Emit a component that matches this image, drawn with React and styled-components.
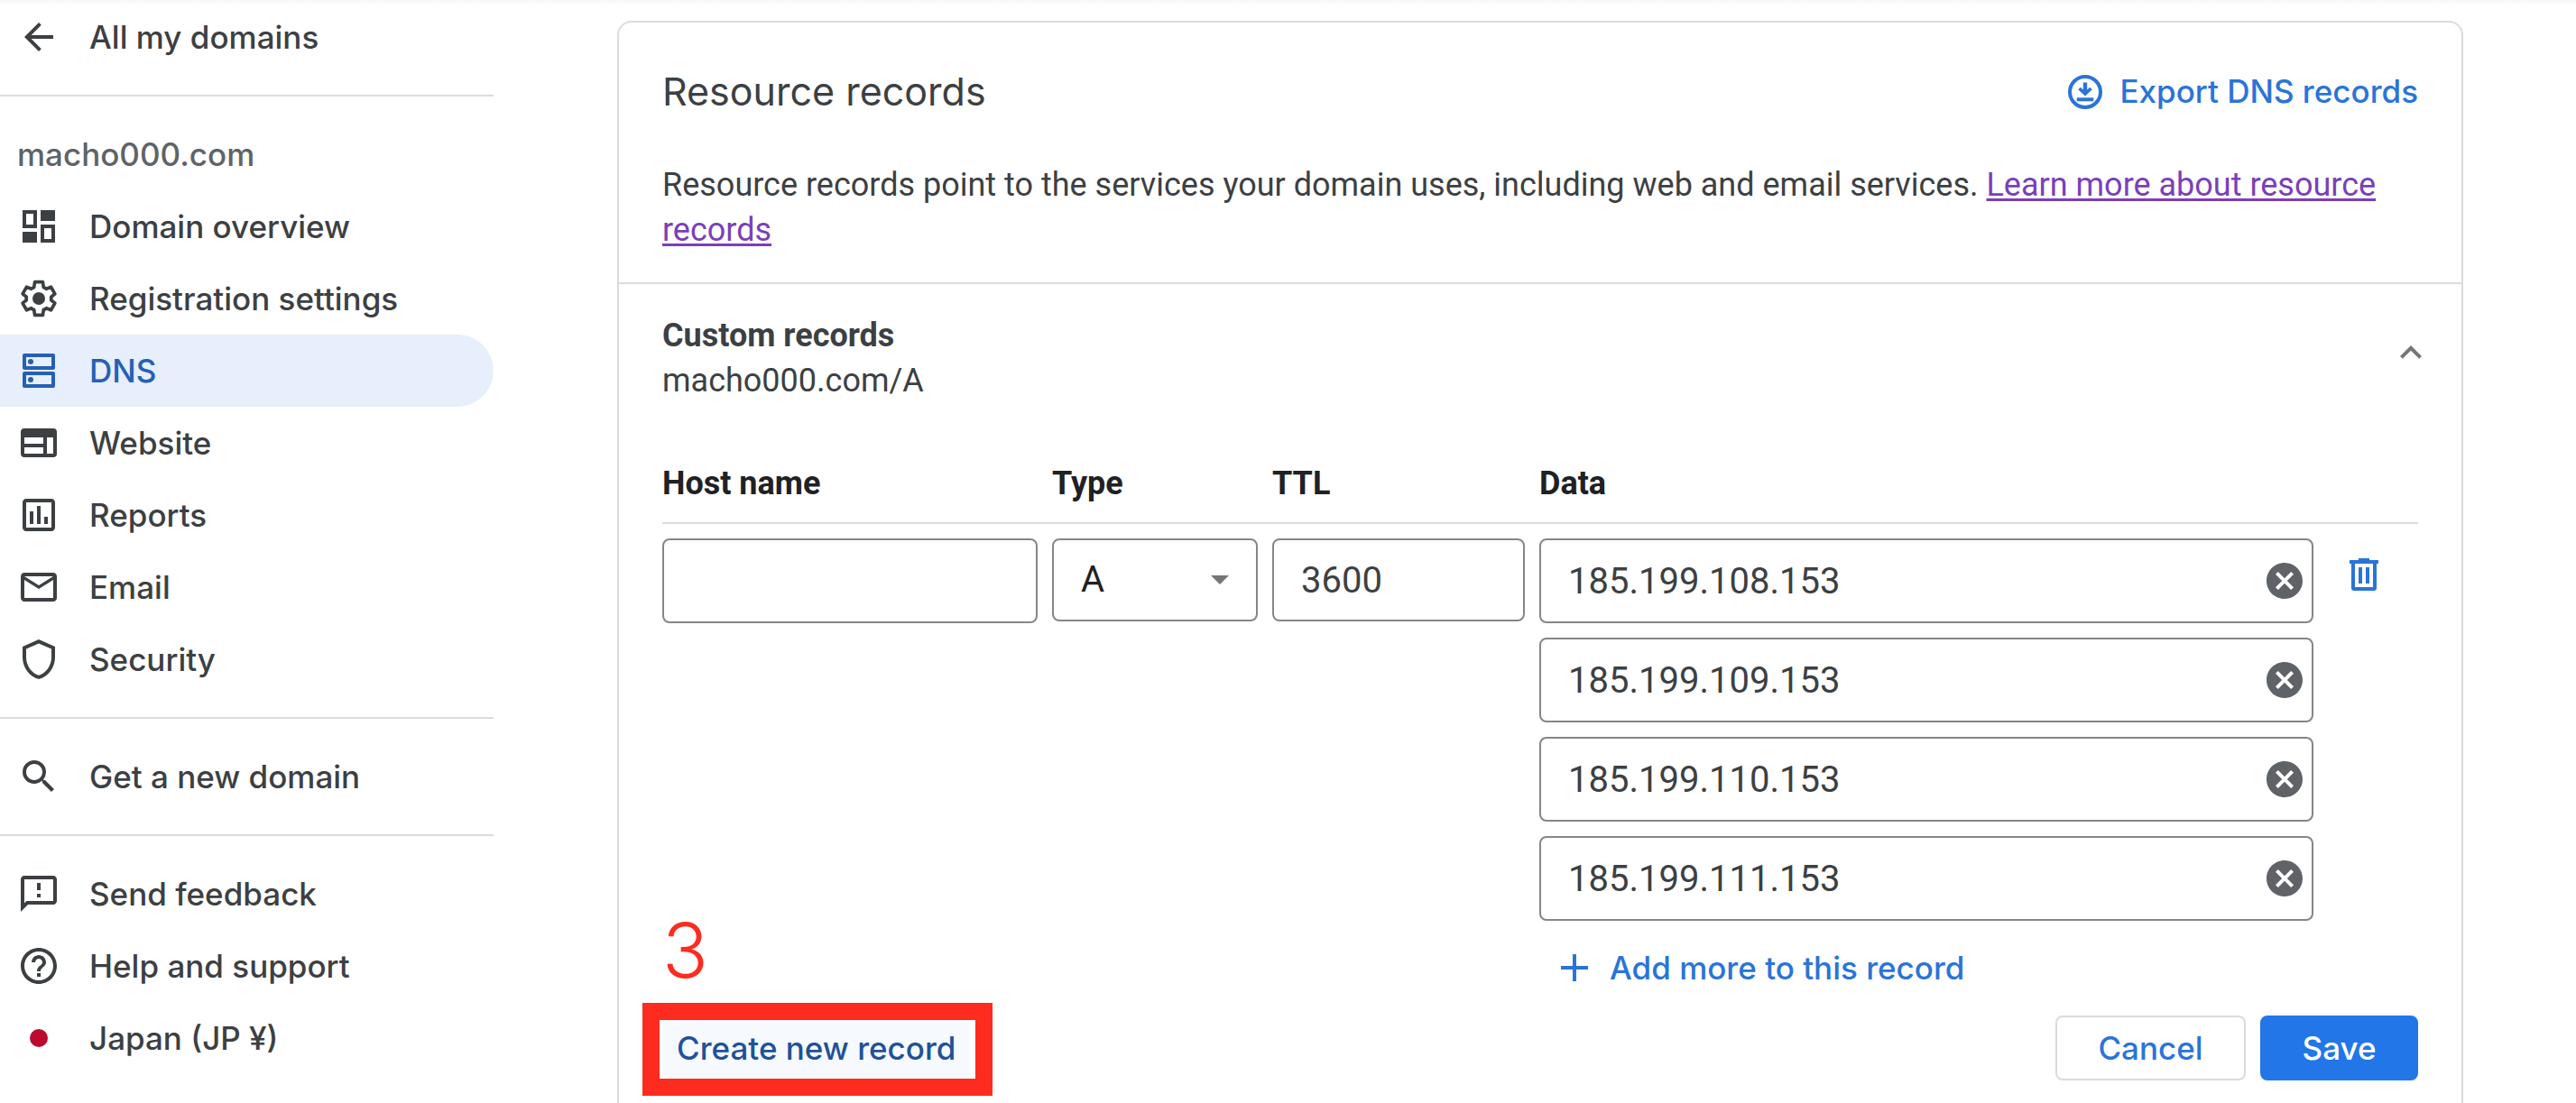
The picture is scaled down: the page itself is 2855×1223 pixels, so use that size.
import React, { useState } from "react";
import styled, { createGlobalStyle } from "styled-components";
import {
  MdArrowBack,
  MdOutlineAssessment,
  MdMailOutline,
  MdSearch,
  MdOutlineFeedback,
  MdHelpOutline,
  MdCancel,
} from "react-icons/md";

const color = {
  text: "#3c4043",
  strong: "#202124",
  muted: "#5f6368",
  line: "#dadbdc",
  field: "#858689",
  blue: "#2a74d8",
  primary: "#2376e7",
  active: "#2560b3",
  activeBg: "#e7eefc",
  visited: "#7b3fb8",
  mark: "#fe2b1f",
};

const display = `Inter, "Noto Sans", sans-serif`;
const body = `Roboto, "Liberation Sans", sans-serif`;

const GlobalStyle = createGlobalStyle`
  *, *::before, *::after { box-sizing: border-box; }
  body {
    margin: 0;
    background: #fff;
    color: ${color.text};
    font: 400 36px/50px ${body};
  }
  button, input, select { font: inherit; color: inherit; margin: 0; }
  svg { display: block; flex: none; }
`;

const Page = styled.div`
  display: flex;
  align-items: stretch;
  min-height: 100vh;
  background: linear-gradient(#f7f7f7, #fff 6px);
`;

/* Sidebar */

const Sidebar = styled.nav`
  flex: none;
  width: 547px;
  padding-top: 1px;
`;

const Group = styled.ul`
  list-style: none;
  margin: 0;
  padding: 0 0 24px;

  & + & {
    border-top: 2px solid ${color.line};
    padding-top: 24px;
  }
`;

const NavLink = styled.a`
  display: flex;
  align-items: center;
  gap: 32px;
  height: 80px;
  padding-left: 19px;
  border-radius: 0 40px 40px 0;
  font: 500 35px/48px ${display};
  text-decoration: none;
  color: ${(p) => (p.$active ? color.active : color.text)};
  background: ${(p) => (p.$active ? color.activeBg : "transparent")};
`;

const DomainName = styled.li`
  display: flex;
  align-items: center;
  height: 80px;
  padding-left: 19px;
  font: 500 35px/48px ${display};
  color: ${color.muted};
`;

/* Card */

const Main = styled.main`
  flex: 1;
  min-width: 0;
  display: flex;
  padding: 23px 125px 0 137px;
`;

const Card = styled.section`
  flex: 1;
  min-width: 0;
  border: 2px solid ${color.line};
  border-bottom: 0;
  border-radius: 16px 16px 0 0;
  background: #fff;
`;

const CardHeader = styled.header`
  padding: 48px 48px 33px;
  border-bottom: 2px solid ${color.line};
`;

const TitleRow = styled.div`
  display: flex;
  align-items: center;
  justify-content: space-between;
  height: 56px;
  margin-bottom: 51px;
`;

const Title = styled.h2`
  margin: 0;
  font: 400 43px/56px ${display};
`;

const TextButton = styled.button`
  display: flex;
  align-items: center;
  gap: 16px;
  padding: 0;
  border: 0;
  background: none;
  color: ${color.blue};
  font: 500 35px/48px ${display};
  white-space: nowrap;
`;

const Description = styled.p`
  margin: 0;
`;

const HelpLink = styled.a`
  color: ${color.visited};
  text-decoration: underline;
  text-decoration-thickness: 3px;
  text-underline-offset: 3px;
`;

const CardBody = styled.div`
  padding: 32px 48px 0;
`;

const SectionHead = styled.div`
  display: flex;
  align-items: flex-start;
  justify-content: space-between;
  margin-bottom: 64px;
`;

const SectionTitle = styled.h3`
  margin: 0;
  font: 700 36px/50px ${body};
`;

const SectionText = styled.p`
  margin: 0;
`;

const IconButton = styled.button`
  flex: none;
  padding: 0;
  border: 0;
  background: none;
  color: ${(p) => p.$color || color.muted};
`;

const Collapse = styled(IconButton)`
  margin: 20px -16px 0 0;
`;

/* Records table */

const Records = styled.table`
  width: 100%;
  table-layout: fixed;
  border-spacing: 0;
`;

const Col = styled.col`
  width: ${(p) => p.$width};
`;

const Th = styled.th`
  padding: 0 0 18px;
  border-bottom: 2px solid ${color.line};
  text-align: left;
  font: 700 36px/50px ${body};
  color: ${color.strong};
`;

const Td = styled.td`
  padding: 16px 16px 0 0;
  vertical-align: top;
`;

const Field = styled.div`
  display: flex;
  align-items: center;
  height: ${(p) => (p.$compact ? "92px" : "94px")};
  padding-right: ${(p) => p.$padRight || "6px"};
  border: 2px solid ${color.field};
  border-radius: 8px;
  background: #fff;
`;

const Input = styled.input`
  flex: 1;
  min-width: 0;
  height: 100%;
  padding: 0 0 0 30px;
  border: 0;
  outline: 0;
  background: none;
  font-size: 40px;
`;

const Select = styled.select`
  flex: 1;
  min-width: 0;
  height: 100%;
  padding: 0 0 0 30px;
  border: 0;
  outline: 0;
  appearance: none;
  background: none;
  color: ${color.strong};
  font-size: 40px;
`;

const DataList = styled.div`
  display: grid;
  gap: 16px;
`;

const AddButton = styled(TextButton)`
  height: 72px;
  padding-left: 24px;
  gap: 24px;
`;

const DeleteCell = styled(Td)`
  padding: 32px 0 0 16px;
`;

/* Actions */

const Actions = styled.div`
  display: flex;
  align-items: center;
  gap: 16px;
  margin-top: 17px;
  padding-bottom: 24px;
`;

const Callout = styled.div`
  position: relative;
  margin-right: auto;
`;

const CalloutFrame = styled.span`
  position: absolute;
  inset: -14px -25px -17px -22px;
  border: 19px solid ${color.mark};
  pointer-events: none;
`;

const CalloutNumber = styled.span`
  position: absolute;
  left: 0;
  bottom: calc(100% + 30px);
  font: 300 84px/84px ${display};
  color: ${color.mark};
`;

const CreateButton = styled.button`
  display: block;
  height: 72px;
  padding: 0 16px;
  border: 0;
  border-radius: 8px;
  background: #f6faff;
  color: #215197;
  font: 500 35px/48px ${display};
`;

const ActionButton = styled.button`
  height: 72px;
  min-width: ${(p) => (p.$primary ? "175px" : "211px")};
  padding: 0 44px;
  border: 2px solid ${(p) => (p.$primary ? color.primary : color.line)};
  border-radius: 8px;
  background: ${(p) => (p.$primary ? color.primary : "#fff")};
  color: ${(p) => (p.$primary ? "#fff" : color.blue)};
  font: 500 35px/48px ${display};
`;

/* Icons */

const Svg = ({ size = 48, box = 24, children }) => (
  <svg width={size} height={size} viewBox={`0 0 ${box} ${box}`} fill="currentColor" aria-hidden="true">
    {children}
  </svg>
);

const DashboardIcon = () => (
  <Svg>
    <path fillRule="evenodd" d="M3 3h8v10H3zM5 5v6h4V5z" />
    <path d="M13 3h8v6h-8zM3 15h8v6H3z" />
    <path fillRule="evenodd" d="M13 11h8v10h-8zM15 13v6h4v-6z" />
  </Svg>
);

const SettingsIcon = () => (
  <Svg>
    <path
      transform="translate(12 12) scale(0.92) translate(-12 -12)"
      fill="none"
      stroke="currentColor"
      strokeWidth="2"
      strokeLinejoin="round"
      d="M19.43 12.98c.04-.32.07-.64.07-.98 0-.34-.03-.66-.07-.98l2.3-1.8-2.4-4.15-2.78 1.1c-.52-.4-1.08-.73-1.69-.98L14.4 2H9.6l-.47 3.19c-.61.25-1.17.58-1.69.98l-2.78-1.1-2.4 4.15 2.31 1.8c-.04.32-.07.65-.07.98 0 .33.03.66.07.98l-2.31 1.8 2.4 4.15 2.78-1.1c.52.4 1.08.73 1.69.98L9.6 22h4.8l.46-3.19c.61-.25 1.17-.58 1.69-.98l2.78 1.1 2.4-4.15z"
    />
    <circle cx="12" cy="12" r="3.5" />
  </Svg>
);

const DnsIcon = () => (
  <Svg>
    <g fill="none" stroke="currentColor" strokeWidth="2" strokeLinejoin="round">
      <path d="M4 3.5h16v7H4zM4 13.5h16v7H4z" />
    </g>
    <circle cx="7.5" cy="7" r="1.5" />
    <circle cx="7.5" cy="17" r="1.5" />
  </Svg>
);

const WebsiteIcon = () => (
  <Svg>
    <path
      fillRule="evenodd"
      d="M4 4h16a2 2 0 0 1 2 2v12a2 2 0 0 1-2 2H4a2 2 0 0 1-2-2V6a2 2 0 0 1 2-2zM4 9v3.5h10.5V9zM4 14.5V18h10.5v-3.5zM16.5 9v9H20V9z"
    />
  </Svg>
);

const ShieldIcon = () => (
  <Svg>
    <path
      fillRule="evenodd"
      d="M12 1 3 5v6c0 5.55 3.84 10.74 9 12 5.16-1.26 9-6.45 9-12V5zM19 11c0 4.52-2.98 8.69-7 9.93C7.98 19.69 5 15.52 5 11V6.3l7-3.11 7 3.11z"
    />
  </Svg>
);

const JapanIcon = () => (
  <Svg>
    <circle cx="12" cy="12" r="5" fill="#bd0a2f" />
  </Svg>
);

const ExportIcon = () => (
  <Svg size={44} box={44}>
    <circle cx="22" cy="23" r="17" fill="none" stroke="currentColor" strokeWidth="4" />
    <path d="M19.800 12.500h4.400v8l3-2.800 2.600 2.600L22 27.500l-7.800-7.200 2.600-2.600 3 2.800z" />
    <path d="M12.700 29.300h18.600v4H12.700z" />
  </Svg>
);

const ChevronUpIcon = () => (
  <Svg>
    <path d="M12 8l-6 6 1.410 1.410L12 10.830l4.590 4.580L18 14z" />
  </Svg>
);

const DropIcon = () => (
  <svg width="20" height="10" viewBox="0 0 20 10" aria-hidden="true">
    <path d="M0 0h20L10 10z" fill="#757575" />
  </svg>
);

const TrashIcon = () => (
  <Svg>
    <path d="M9 3h6v1h5v2H4V4h5z" />
    <path fillRule="evenodd" d="M5 5h14v14.500a1.500 1.500 0 0 1-1.500 1.500h-11A1.500 1.500 0 0 1 5 19.500zM7 6v13h10V6z" />
    <path d="M9 8h2v9H9zM13 8h2v9h-2z" />
  </Svg>
);

const PlusIcon = () => (
  <Svg size={30} box={30}>
    <path d="M13 0h4v13h13v4H17v13h-4V17H0v-4h13z" />
  </Svg>
);

const groups = [
  { items: [{ label: "All my domains", icon: <MdArrowBack size={48} /> }] },
  {
    name: "macho000.com",
    items: [
      { label: "Domain overview", icon: <DashboardIcon /> },
      { label: "Registration settings", icon: <SettingsIcon /> },
      { label: "DNS", icon: <DnsIcon />, active: true },
      { label: "Website", icon: <WebsiteIcon /> },
      { label: "Reports", icon: <MdOutlineAssessment size={48} /> },
      { label: "Email", icon: <MdMailOutline size={48} /> },
      { label: "Security", icon: <ShieldIcon /> },
    ],
  },
  { items: [{ label: "Get a new domain", icon: <MdSearch size={48} /> }] },
  {
    items: [
      { label: "Send feedback", icon: <MdOutlineFeedback size={48} /> },
      { label: "Help and support", icon: <MdHelpOutline size={48} /> },
      { label: "Japan (JP ¥)", icon: <JapanIcon /> },
    ],
  },
];

function RecordsEditor() {
  const [host, setHost] = useState("");
  const [ttl, setTtl] = useState("3600");
  const [data, setData] = useState([
    "185.199.108.153",
    "185.199.109.153",
    "185.199.110.153",
    "185.199.111.153",
  ]);

  const update = (index, value) => setData(data.map((v, i) => (i === index ? value : v)));

  return (
    <Records>
      <colgroup>
        <Col $width="432px" />
        <Col $width="244px" />
        <Col $width="296px" />
        <Col $width="auto" />
        <Col $width="100px" />
      </colgroup>
      <thead>
        <tr>
          <Th scope="col">Host name</Th>
          <Th scope="col">Type</Th>
          <Th scope="col">TTL</Th>
          <Th scope="col" colSpan={2}>Data</Th>
        </tr>
      </thead>
      <tbody>
        <tr>
          <Td>
            <Field>
              <Input aria-label="Host name" value={host} onChange={(e) => setHost(e.target.value)} />
            </Field>
          </Td>
          <Td>
            <Field $compact $padRight="30px">
              <Select aria-label="Type" defaultValue="A">
                <option>A</option>
              </Select>
              <DropIcon />
            </Field>
          </Td>
          <Td>
            <Field $compact>
              <Input aria-label="TTL" value={ttl} onChange={(e) => setTtl(e.target.value)} />
            </Field>
          </Td>
          <Td>
            <DataList>
              {data.map((value, i) => (
                <Field key={i}>
                  <Input
                    aria-label={`Data ${i + 1}`}
                    value={value}
                    onChange={(e) => update(i, e.target.value)}
                  />
                  <IconButton
                    type="button"
                    aria-label={`Remove data ${i + 1}`}
                    onClick={() => setData(data.filter((_, n) => n !== i))}
                  >
                    <MdCancel size={48} />
                  </IconButton>
                </Field>
              ))}
              <AddButton type="button" onClick={() => setData([...data, ""])}>
                <PlusIcon />
                Add more to this record
              </AddButton>
            </DataList>
          </Td>
          <DeleteCell>
            <IconButton type="button" $color={color.blue} aria-label="Delete record">
              <TrashIcon />
            </IconButton>
          </DeleteCell>
        </tr>
      </tbody>
    </Records>
  );
}

export default function App() {
  return (
    <>
      <GlobalStyle />
      <Page>
        <Sidebar aria-label="Domain">
          {groups.map((group, i) => (
            <Group key={i}>
              {group.name && <DomainName>{group.name}</DomainName>}
              {group.items.map((item) => (
                <li key={item.label}>
                  <NavLink href="#" $active={item.active} aria-current={item.active ? "page" : undefined}>
                    {item.icon}
                    {item.label}
                  </NavLink>
                </li>
              ))}
            </Group>
          ))}
        </Sidebar>
        <Main>
          <Card>
            <CardHeader>
              <TitleRow>
                <Title>Resource records</Title>
                <TextButton type="button">
                  <ExportIcon />
                  Export DNS records
                </TextButton>
              </TitleRow>
              <Description>
                Resource records point to the services your domain uses, including web and email services.{" "}
                <HelpLink href="#">Learn more about resource records</HelpLink>
              </Description>
            </CardHeader>
            <CardBody>
              <SectionHead>
                <div>
                  <SectionTitle>Custom records</SectionTitle>
                  <SectionText>macho000.com/A</SectionText>
                </div>
                <Collapse type="button" $color="#757575" aria-label="Collapse custom records">
                  <ChevronUpIcon />
                </Collapse>
              </SectionHead>
              <RecordsEditor />
              <Actions>
                <Callout>
                  <CreateButton type="button">Create new record</CreateButton>
                  <CalloutFrame />
                  <CalloutNumber>3</CalloutNumber>
                </Callout>
                <ActionButton type="button">Cancel</ActionButton>
                <ActionButton type="button" $primary>
                  Save
                </ActionButton>
              </Actions>
            </CardBody>
          </Card>
        </Main>
      </Page>
    </>
  );
}
